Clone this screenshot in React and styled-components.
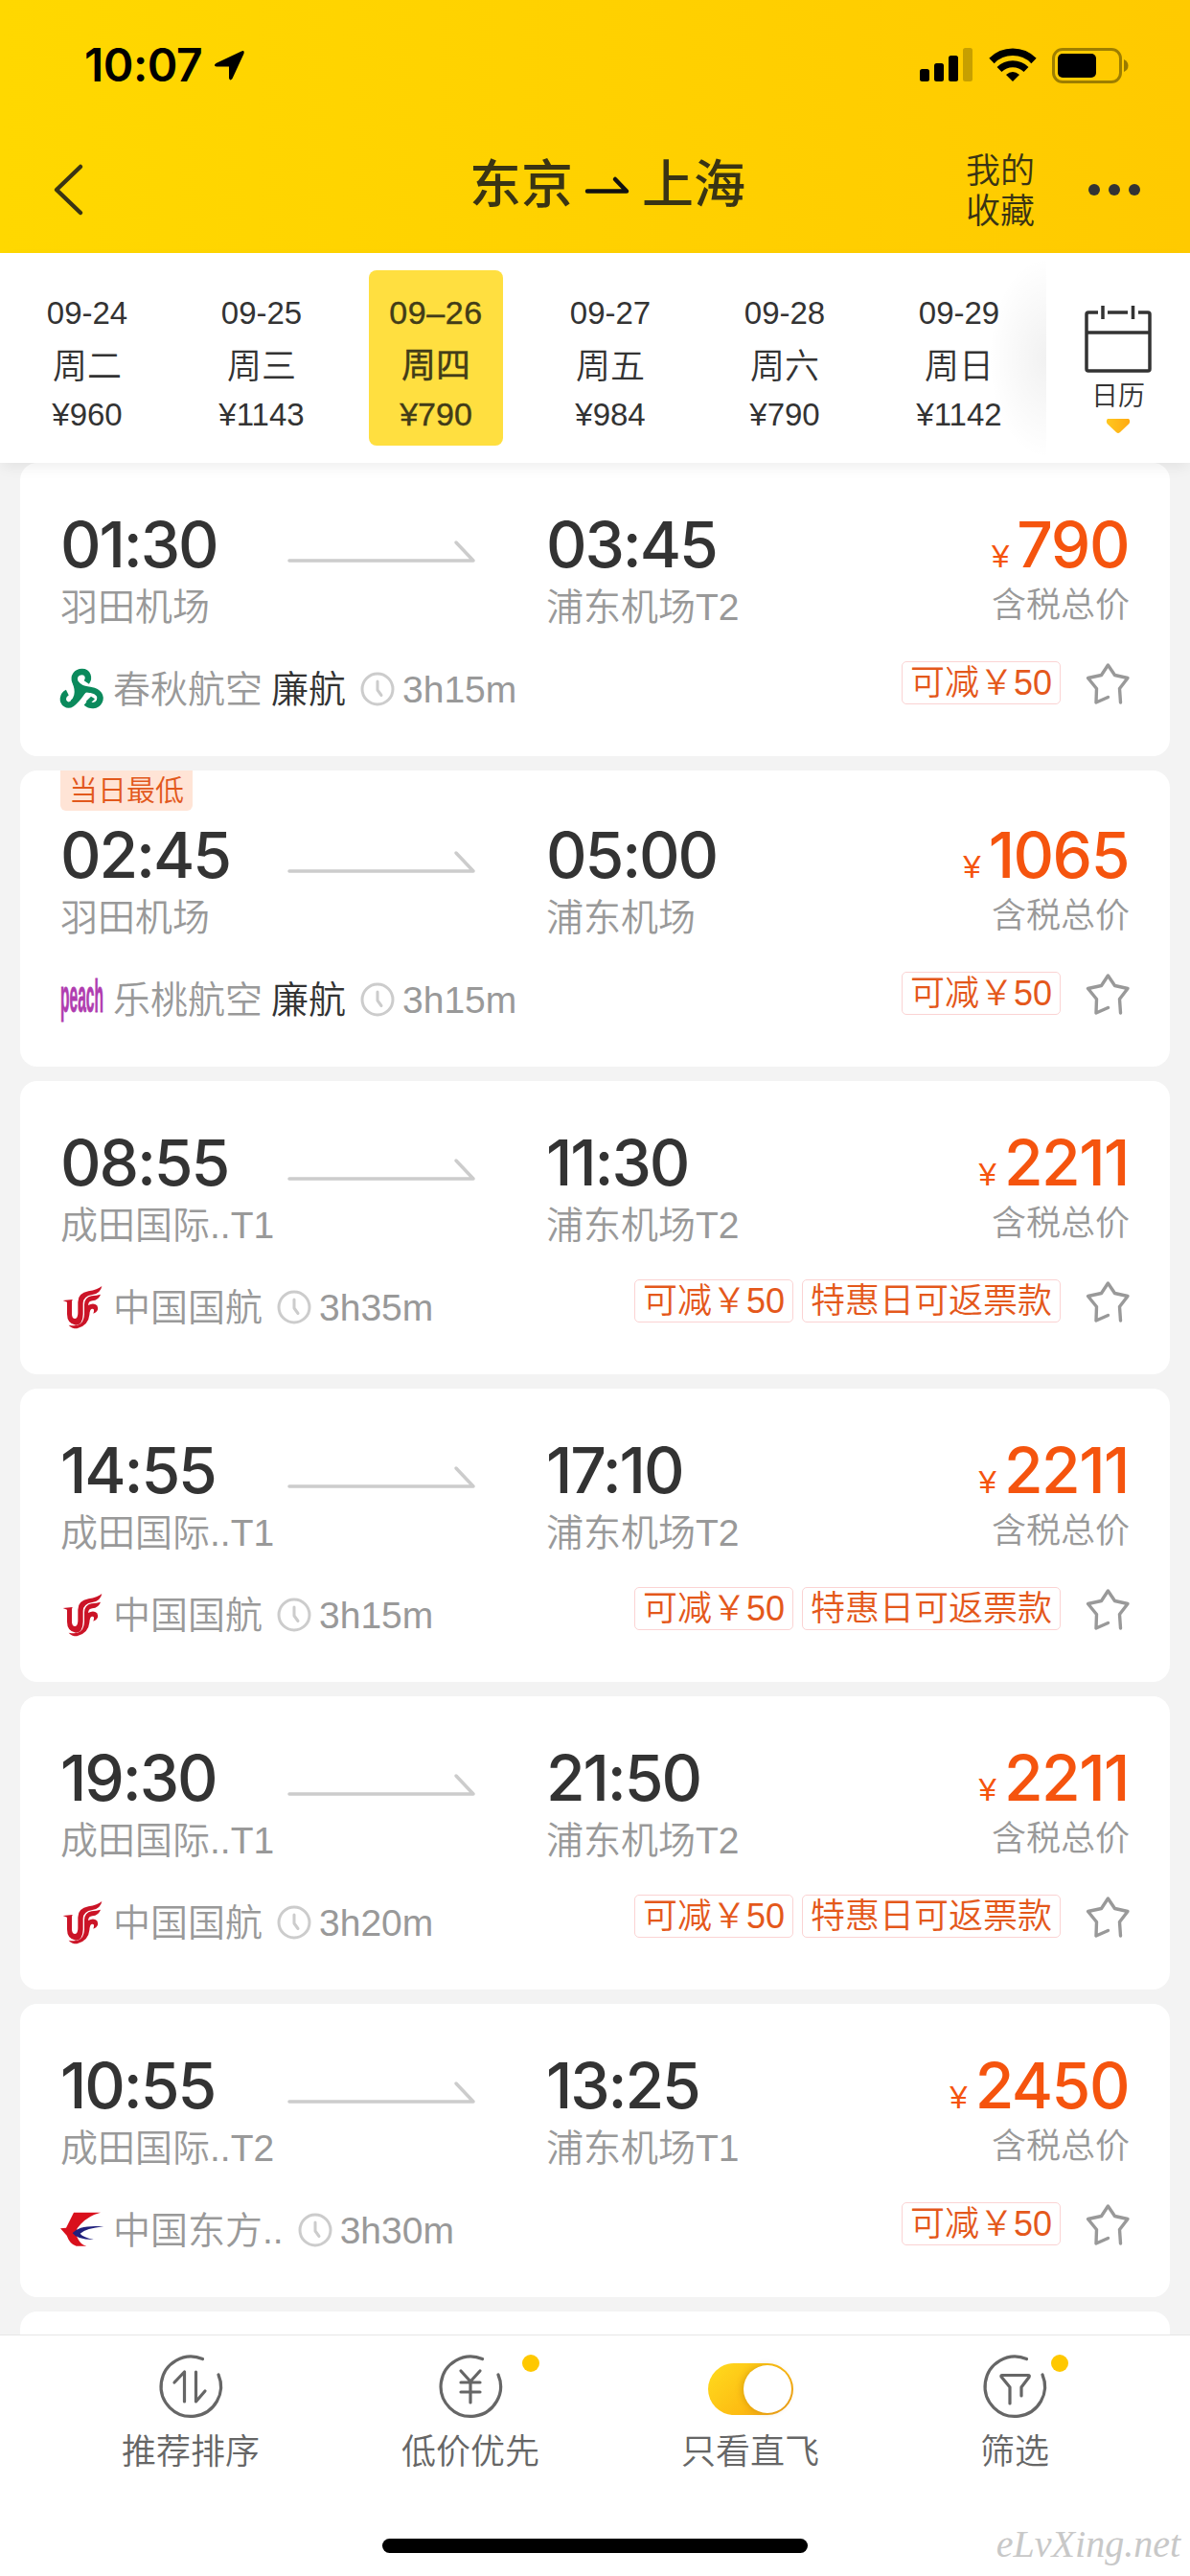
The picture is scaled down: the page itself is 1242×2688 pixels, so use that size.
import styled, { createGlobalStyle } from "styled-components";

const dates = [
  { date: "09-24", week: "周二", price: "¥960" },
  { date: "09-25", week: "周三", price: "¥1143" },
  { date: "09–26", week: "周四", price: "¥790", active: true },
  { date: "09-27", week: "周五", price: "¥984" },
  { date: "09-28", week: "周六", price: "¥790" },
  { date: "09-29", week: "周日", price: "¥1142" },
];

const flights = [
  { id: 1, dep: "01:30", from: "羽田机场", arr: "03:45", to: "浦东机场T2", price: "790", logo: "spring", airline: "春秋航空", lowCost: true, time: "3h15m", tags: ["可减￥50"] },
  { id: 2, dep: "02:45", from: "羽田机场", arr: "05:00", to: "浦东机场", price: "1065", logo: "peach", airline: "乐桃航空", lowCost: true, time: "3h15m", tags: ["可减￥50"], lowest: true },
  { id: 3, dep: "08:55", from: "成田国际..T1", arr: "11:30", to: "浦东机场T2", price: "2211", logo: "airchina", airline: "中国国航", time: "3h35m", tags: ["可减￥50", "特惠日可返票款"] },
  { id: 4, dep: "14:55", from: "成田国际..T1", arr: "17:10", to: "浦东机场T2", price: "2211", logo: "airchina", airline: "中国国航", time: "3h15m", tags: ["可减￥50", "特惠日可返票款"] },
  { id: 5, dep: "19:30", from: "成田国际..T1", arr: "21:50", to: "浦东机场T2", price: "2211", logo: "airchina", airline: "中国国航", time: "3h20m", tags: ["可减￥50", "特惠日可返票款"] },
  { id: 6, dep: "10:55", from: "成田国际..T2", arr: "13:25", to: "浦东机场T1", price: "2450", logo: "eastern", airline: "中国东方..", time: "3h30m", tags: ["可减￥50"] },
];

const logos = {
  spring: (
    <svg width="45" height="45" viewBox="24 12 135 135">
      <g fill="none" stroke="#0b8a5c" strokeWidth="19" strokeLinecap="butt">
        <path d="M106 66C116 52 110 33 92 33C74 33 64 48 70 64C78 82 80 94 76 108C70 132 52 142 41 134C28 125 30 106 46 98" />
        <path d="M72 68C86 88 102 87 120 90C144 94 154 110 146 126C138 141 118 142 104 130" />
        <path d="M62 130C78 120 84 108 94 94" />
      </g>
      <path d="M70 66L118 88L96 104L72 126Z" fill="#0b8a5c" />
      <path d="M104 126L120 110L132 118L116 134Z" fill="#0b8a5c" />
    </svg>
  ),
  peach: (
    <svg width="45" height="45" viewBox="0 0 45 45">
      <text x="0" y="38" textLength="45" lengthAdjust="spacingAndGlyphs" fill="#b03cb0" stroke="#b03cb0" strokeWidth="0.8" fontFamily="Liberation Sans, sans-serif" fontWeight="700" fontSize="48">peach</text>
    </svg>
  ),
  airchina: (
    <svg width="45" height="45" viewBox="24 15 135 135">
      <g fill="#cb1427">
        <path d="M32 69L62 66L60 72V112Q60 126 70 126Q79 125 79 108V74Q79 46 112 40Q140 36 154 24Q150 47 124 51Q96 55 95 78V112Q94 147 72 146Q45 142 45 112V74Z" />
        <path d="M150 50Q144 68 124 70Q112 71 111 84Q128 74 139 85Q148 104 127 110Q133 94 123 95Q116 96 115 114Q112 148 76 157Q58 157 50 146Q97 156 99 112V82Q100 59 122 55Q138 54 150 50Z" />
      </g>
    </svg>
  ),
  eastern: (
    <svg width="45" height="45" viewBox="24 6 135 135">
      <path d="M66 26H150Q112 36 88 62Q64 84 80 110Q88 126 106 131H74Q54 126 44 98L24 76L42 74Z" fill="#d9101c" />
      <path d="M160 70Q82 64 62 91Q78 112 128 111Q96 104 86 92Q104 76 160 70Z" fill="#20207c" />
    </svg>
  ),
};

const StarIcon = () => (
  <svg width="49" height="45" viewBox="0 0 49 45" fill="none" stroke="#999" strokeWidth="3.4" strokeLinecap="round" strokeLinejoin="round">
    <path d="M26.500 37.500L14 43L14.500 28.500L5.500 17.500L19.500 14.500L26.400 4L33.500 14.500L47 17.500L38.500 28.500L39.500 43" />
  </svg>
);

const ClockIcon = () => (
  <svg width="36" height="36" viewBox="0 0 36 36" fill="none" stroke="#ccc" strokeWidth="3" strokeLinecap="round" strokeLinejoin="round">
    <circle cx="18" cy="18" r="16" />
    <path d="M18 10V19L22 24.5" />
  </svg>
);

// open ring shared by the footer icons
const Ring = ({ children }) => (
  <svg width="66" height="66" viewBox="0 0 66 66" fill="none" stroke="#666" strokeWidth="3.2" strokeLinecap="round" strokeLinejoin="round">
    <path d="M45.5 4.5A31.2 31.2 0 1 0 62 21" />
    {children}
  </svg>
);

const Flight = ({ flight }) => {
  const { dep, from, arr, to, price, logo, airline, lowCost, time, tags, lowest } = flight;
  return (
    <Card $lowest={lowest}>
      {lowest && <Lowest>当日最低</Lowest>}
      <Route>
        <div>
          <Time>{dep}</Time>
          <Airport>{from}</Airport>
        </div>
        <Arrow viewBox="0 0 198 24">
          <path d="M2 22H194L176 3" />
        </Arrow>
        <div>
          <Time>{arr}</Time>
          <Airport>{to}</Airport>
        </div>
        <PriceBox>
          <Price><small>¥</small>{price}</Price>
          <Tax>含税总价</Tax>
        </PriceBox>
      </Route>
      <Bottom>
        <Airline>
          <Logo>{logos[logo]}</Logo>
          <span>{airline}</span>
          {lowCost && <LowCost>廉航</LowCost>}
          <Clock><ClockIcon /></Clock>
          <span>{time}</span>
        </Airline>
        <Tags>
          {tags.map(tag => <Tag key={tag}>{tag}</Tag>)}
          <Star><StarIcon /></Star>
        </Tags>
      </Bottom>
    </Card>
  );
};

const App = () => {
  return (
    <Page>
      <GlobalStyle />
      <Header>
        <StatusBar>
          <StatusTime>10:07</StatusTime>
          <svg width="33" height="33" viewBox="0 0 33 33">
            <path d="M2.5 14L29 1.5Q32.5 0 31.5 4L19.5 30Q17 33 16 29.500V17.500H3Q-1 16.500 2.500 14Z" />
          </svg>
          <StatusIcons>
            <svg width="56" height="36" viewBox="0 0 56 36">
              <rect x="0" y="22" width="10" height="13" rx="2.500" />
              <rect x="15" y="16" width="10" height="19" rx="2.500" />
              <rect x="30" y="8" width="10" height="27" rx="2.500" />
              <rect x="45" y="0" width="10" height="35" rx="2.500" opacity="0.22" />
            </svg>
            <svg width="50" height="36" viewBox="0 0 50 36" fill="none" stroke="#000">
              <path d="M3 13.500A31 31 0 0 1 47 13.500" strokeWidth="7.500" />
              <path d="M11 22.500A20 20 0 0 1 39 22.500" strokeWidth="7" />
              <path d="M25 35L18 28Q25 22 32 28Z" fill="#000" stroke="none" />
            </svg>
            <svg width="80" height="37" viewBox="0 0 80 37">
              <rect x="1.500" y="1.500" width="70" height="34" rx="9.500" fill="none" stroke="#000" strokeWidth="3" opacity="0.38" />
              <rect x="6" y="6" width="40" height="25" rx="5" />
              <path d="M75 12Q79.500 14 79.500 18.500T75 25Z" opacity="0.4" />
            </svg>
          </StatusIcons>
        </StatusBar>
        <NavBar>
          <Back>
            <svg width="34" height="56" viewBox="0 0 34 56" fill="none" stroke="#3a3414" strokeWidth="4.500" strokeLinecap="round" strokeLinejoin="round">
              <path d="M29 4L4 28L29 52" />
            </svg>
          </Back>
          <Title>
            <span>东京</span>
            <svg width="46" height="18" viewBox="0 0 46 18" fill="none" stroke="#111" strokeWidth="4.500" strokeLinecap="round" strokeLinejoin="round">
              <path d="M2 15.500H43L31 3" />
            </svg>
            <span>上海</span>
          </Title>
          <Favorites>我的<br />收藏</Favorites>
          <Dots><i /><i /><i /></Dots>
        </NavBar>
      </Header>

      <DateBar>
        <DateList>
          {dates.map(({ date, week, price, active }) => (
            <DateItem key={date} $active={active}>
              <span>{date}</span>
              <Week>{week}</Week>
              <span>{price}</span>
            </DateItem>
          ))}
        </DateList>
        <Calendar>
          <svg width="72" height="72" viewBox="0 0 72 72" fill="none" stroke="#333" strokeWidth="3.500" strokeLinejoin="round">
            <path d="M15 8H5Q3 8 3 10V67Q3 69 5 69H67Q69 69 69 67V10Q69 8 67 8H57M25 8H46M3 29H69M20 1V15M51.500 1V15" />
          </svg>
          <span>日历</span>
          <svg width="26" height="17" viewBox="0 0 26 17">
            <defs>
              <linearGradient id="drop" x1="0" x2="1">
                <stop offset="0" stopColor="#ffc820" />
                <stop offset="1" stopColor="#ffa912" />
              </linearGradient>
            </defs>
            <path d="M2 1H24Q26 3 24.500 6L15 15Q13 17 11 15L1.500 6Q0 3 2 1Z" fill="url(#drop)" />
          </svg>
        </Calendar>
      </DateBar>

      <List>
        {flights.map(flight => <Flight key={flight.id} flight={flight} />)}
        <Card />
      </List>

      <Footer>
        <FooterItem>
          <Ring><path d="M16 29L26.500 18V49M38.500 18V49L48 38" /></Ring>
          <span>推荐排序</span>
        </FooterItem>
        <FooterItem>
          <Ring><path d="M23 17L33 28L43 17M33 28V50M23 29H43M23 39H43" /></Ring>
          <span>低价优先</span>
          <Badge />
        </FooterItem>
        <FooterItem>
          <Toggle><i /></Toggle>
          <span>只看直飞</span>
        </FooterItem>
        <FooterItem>
          <Ring><path d="M28 51V34L19 23Q18.500 21.500 20 21.500H47Q49 21.500 48 23.500L40 34V43" /></Ring>
          <span>筛选</span>
          <Badge />
        </FooterItem>
      </Footer>
      <HomeBar><i /></HomeBar>
      <Watermark>eLvXing.net</Watermark>
    </Page>
  );
};
export default App;

const GlobalStyle = createGlobalStyle`
  body {
    margin: 0;
    background-color: #fff;
  }
  svg {
    display: block;
    overflow: visible;
    flex-shrink: 0;
  }
`;
const Page = styled.div`
  position: relative;
  display: flex;
  flex-direction: column;
  width: 1242px;
  height: 2688px;
  overflow: hidden;
  box-sizing: border-box;
  color: #333;
  font-family: "Liberation Sans", "Noto Sans CJK SC", sans-serif;
  font-weight: 350;
`;
const Header = styled.header`
  height: 264px;
  flex-shrink: 0;
  background: linear-gradient(90deg, #ffd800, #ffca00);
`;
const StatusBar = styled.div`
  display: flex;
  align-items: flex-start;
  box-sizing: border-box;
  height: 132px;
  padding: 50px 64px 0 88px;
  > svg {
    margin: 2px 0 0 10px;
  }
`;
const StatusTime = styled.span`
  width: 125px;
  margin-top: -7px;
  color: #000;
  font-family: Inter, sans-serif;
  font-size: 48px;
  font-weight: 600;
  line-height: 50px;
  letter-spacing: -0.5px;
  white-space: nowrap;
`;
const StatusIcons = styled.div`
  display: flex;
  gap: 16px;
  margin-left: auto;
`;
const NavBar = styled.nav`
  display: flex;
  align-items: center;
  height: 132px;
`;
const Back = styled.div`
  width: 433px;
  box-sizing: border-box;
  padding-left: 55px;
`;
const Title = styled.h1`
  display: flex;
  align-items: center;
  gap: 13px;
  margin: 0 0 10px 57px;
  color: #3a3414;
  font-size: 54px;
  font-weight: 500;
  line-height: 60px;
`;
const Favorites = styled.div`
  margin: 4px 0 0 230px;
  color: #3a3414;
  font-size: 36px;
  line-height: 42px;
`;
const Dots = styled.div`
  display: flex;
  gap: 9px;
  margin-left: 56px;
  i {
    width: 12px;
    height: 12px;
    border-radius: 50%;
    background-color: #333;
  }
`;
const DateBar = styled.div`
  position: relative;
  z-index: 1;
  display: flex;
  flex-shrink: 0;
  height: 219px;
  background-color: #fff;
  box-shadow: 0 6px 14px -2px rgba(0, 0, 0, 0.07);
`;
const DateList = styled.div`
  display: flex;
  gap: 42px;
  box-sizing: border-box;
  width: 1092px;
  padding: 18px 0 0 21px;
  background:
    radial-gradient(ellipse 60px 105px at 100% 50%, rgba(0, 0, 0, 0.055), rgba(0, 0, 0, 0)) no-repeat;
`;
const Week = styled.span`
  padding-top: 2px;
  font-size: 36px;
`;
const DateItem = styled.div`
  display: flex;
  flex-direction: column;
  align-items: center;
  box-sizing: border-box;
  width: 140px;
  height: 183px;
  padding-top: ${({ $active }) => ($active ? "17px" : "18px")};
  border-radius: 8px;
  font-size: 33px;
  line-height: 54px;
  white-space: nowrap;
  > span:last-child {
    margin-top: -4px;
  }
  ${({ $active }) => $active && `
    background-color: #ffdf40;
    color: #423c18;
    font-size: 34px;
    -webkit-text-stroke: 0.4px;
    > span:first-child { letter-spacing: 0.6px; }
  `}
  ${Week} {
    font-weight: ${({ $active }) => ($active ? 400 : 350)};
  }
`;
const Calendar = styled.div`
  display: flex;
  flex-direction: column;
  align-items: center;
  width: 150px;
  padding-top: 54px;
  font-size: 28px;
  > span {
    margin: 5px 0 3px;
    line-height: 38px;
  }
`;
const List = styled.main`
  display: flex;
  flex-direction: column;
  gap: 15px;
  height: 1953px;
  padding: 0 21px;
  overflow: hidden;
  background-color: #f3f3f3;
`;
const Card = styled.section`
  position: relative;
  flex-shrink: 0;
  box-sizing: border-box;
  height: ${({ $lowest }) => ($lowest ? "309px" : "306px")};
  padding: ${({ $lowest }) => ($lowest ? "55px" : "52px")} 42px 0;
  border-radius: 18px;
  background-color: #fff;
`;
const Lowest = styled.span`
  position: absolute;
  top: 0;
  left: 42px;
  width: 138px;
  border-radius: 0 0 6px 6px;
  background-color: #ffe4d6;
  color: #e2581c;
  font-size: 30px;
  line-height: 42px;
  text-align: center;
`;
const Route = styled.div`
  display: grid;
  grid-template-columns: 237px 270px 1fr auto;
`;
const Time = styled.div`
  font-family: Inter, sans-serif;
  font-size: 66px;
  font-weight: 500;
  line-height: 66px;
  letter-spacing: -2.1px;
`;
const Airport = styled.div`
  margin-top: 10px;
  color: #999;
  font-size: 39px;
  line-height: 46px;
`;
const Arrow = styled.svg`
  width: 198px;
  height: 24px;
  margin-top: 28px;
  fill: none;
  stroke: #ccc;
  stroke-width: 3.5;
  stroke-linecap: round;
  stroke-linejoin: round;
`;
const PriceBox = styled.div`
  text-align: right;
`;
const Price = styled(Time)`
  padding-right: 1px;
  color: #f5540e;
  letter-spacing: -1.5px;
  small {
    margin-right: 8px;
    font-family: "Liberation Sans", sans-serif;
    font-size: 33px;
    line-height: 0;
    letter-spacing: 0;
  }
`;
const Tax = styled(Airport)`
  margin-top: 8px;
  font-size: 36px;
`;
const Bottom = styled.div`
  display: flex;
  justify-content: space-between;
  margin-top: 33px;
`;
const Airline = styled.div`
  display: flex;
  padding-top: 4px;
  color: #999;
  font-size: 39px;
  line-height: 51px;
`;
const Logo = styled.div`
  width: 55px;
`;
const LowCost = styled.span`
  margin-left: 9px;
  color: #333;
`;
const Clock = styled.div`
  margin: 7px 8px 0 15px;
`;
const Tags = styled.div`
  display: flex;
  gap: 9px;
`;
const Tag = styled.span`
  height: 43px;
  padding: 0 8px;
  border: 1px solid #fbd3d3;
  border-radius: 5px;
  color: #e4581b;
  font-size: 36px;
  line-height: 43px;
`;
const Star = styled.div`
  margin-left: 14px;
`;
const Footer = styled.footer`
  display: flex;
  justify-content: space-between;
  flex-shrink: 0;
  box-sizing: border-box;
  height: 184px;
  padding: 20px 127px 0;
  border-top: 1px solid #e6e6e6;
  background-color: #fff;
`;
const FooterItem = styled.div`
  position: relative;
  display: flex;
  flex-direction: column;
  align-items: center;
  min-width: 112px;
  color: #666;
  font-size: 36px;
  > span {
    margin-top: 11px;
    line-height: 50px;
  }
`;
const Badge = styled.i`
  position: absolute;
  top: 0;
  right: 0;
  width: 18px;
  height: 18px;
  border-radius: 50%;
  background-color: #ffc800;
`;
const Toggle = styled.div`
  display: flex;
  justify-content: flex-end;
  box-sizing: border-box;
  width: 89px;
  height: 54px;
  margin: 9px 0 3px;
  padding: 2px;
  border-radius: 27px;
  background: linear-gradient(135deg, #ffdc1e, #fdbb12 60%, #e99a1a);
  i {
    width: 50px;
    height: 50px;
    border-radius: 50%;
    background-color: #fff;
    box-shadow: -2px 0 6px rgba(160, 100, 0, 0.3);
  }
`;
const HomeBar = styled.div`
  display: flex;
  justify-content: center;
  padding-top: 29px;
  i {
    width: 444px;
    height: 15px;
    border-radius: 8px;
    background-color: #000;
  }
`;
const Watermark = styled.div`
  position: absolute;
  right: 10px;
  bottom: 10px;
  color: #c8c8c8;
  font-family: "Liberation Serif", serif;
  font-size: 40px;
  font-style: italic;
  line-height: 46px;
`;
